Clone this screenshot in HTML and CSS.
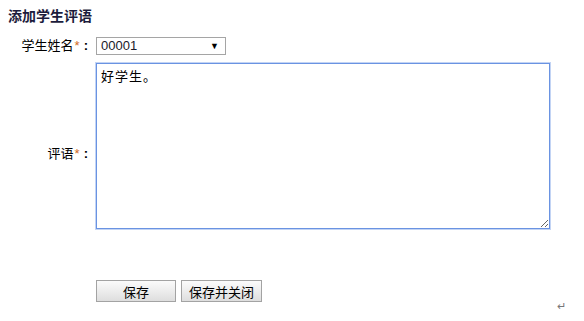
FILE: index.html
```html
<!DOCTYPE html>
<html>
<head>
    <title>添加学生评语</title>
    <link rel="stylesheet" href="styles.css">
</head>
<body>
    <h3 class="title">添加学生评语</h3>
    <form class="form">
        <label class="label">学生姓名<span class="req">*</span><span class="colon">:</span></label>
        <div class="field">
            <span class="select-wrap">
                <select class="select">
                    <option>00001</option>
                    <option>00002</option>
                </select>
            </span>
        </div>

        <label class="label label-mid">评语<span class="req">*</span><span class="colon">:</span></label>
        <div class="field">
            <textarea class="comment">好学生。</textarea>
        </div>

        <div></div>
        <div class="actions">
            <button type="button" class="btn btn-save">保存</button>
            <button type="button" class="btn btn-close">保存并关闭</button>
        </div>
    </form>
    <div class="mark">↵</div>
</body>
</html>
```

FILE: styles.css
```css
body {
    margin: 8px;
    font-family: "Liberation Sans", "Noto Sans CJK SC", sans-serif;
    font-size: 13px;
    color: #000;
    background: #fff;
}

.title {
    margin: 0;
    font-size: 14px;
    line-height: 16px;
    font-weight: bold;
    color: #1c1c3c;
}

.form {
    display: grid;
    grid-template-columns: 80px 1fr;
    column-gap: 8px;
    row-gap: 8px;
    margin-top: 13px;
}

.label {
    text-align: right;
    line-height: 18px;
    white-space: nowrap;
}

.label-mid {
    align-self: center;
    padding-top: 16px;
}

.req {
    color: #d2691e;
    padding-left: 1px;
}

.colon {
    font-weight: bold;
    padding-left: 4px;
}

.select-wrap {
    position: relative;
    display: inline-block;
}

.select-wrap::after {
    content: "▼";
    position: absolute;
    right: 7px;
    top: 3px;
    font-size: 9px;
    line-height: 12px;
    color: #000;
    pointer-events: none;
}

.select {
    appearance: none;
    -webkit-appearance: none;
    width: 130px;
    height: 18px;
    margin: 0;
    padding: 0 4px;
    border: 1px solid #a5a5a5;
    border-radius: 0;
    background: #fff;
    font-family: "Liberation Sans", "Noto Sans CJK SC", sans-serif;
    font-size: 13px;
    line-height: 16px;
    color: #1a1a2a;
}

.comment {
    display: block;
    width: 454px;
    height: 166px;
    margin: 0;
    padding: 3px 4px;
    box-sizing: border-box;
    border: 1px solid #6a93e2;
    box-shadow: 0 0 0 1px #c3d4f4;
    border-radius: 0;
    outline: none;
    font-family: "Noto Sans CJK SC", sans-serif;
    font-size: 13px;
    line-height: 18px;
    letter-spacing: 1px;
    color: #000;
    resize: both;
}

.actions {
    display: flex;
    gap: 5px;
    margin-top: 43px;
}

.btn {
    height: 22px;
    margin: 0;
    padding: 0;
    border: 1px solid #a3a3a3;
    border-radius: 0;
    background: linear-gradient(#fbfbfb, #dedede);
    font-family: "Noto Sans CJK SC", sans-serif;
    font-size: 13px;
    color: #000;
    cursor: pointer;
}

.btn-save {
    width: 80px;
}

.btn-close {
    width: 81px;
}

.mark {
    text-align: right;
    margin-right: 10px;
    margin-top: -2px;
    font-size: 11px;
    line-height: 12px;
    color: #777;
}
```
